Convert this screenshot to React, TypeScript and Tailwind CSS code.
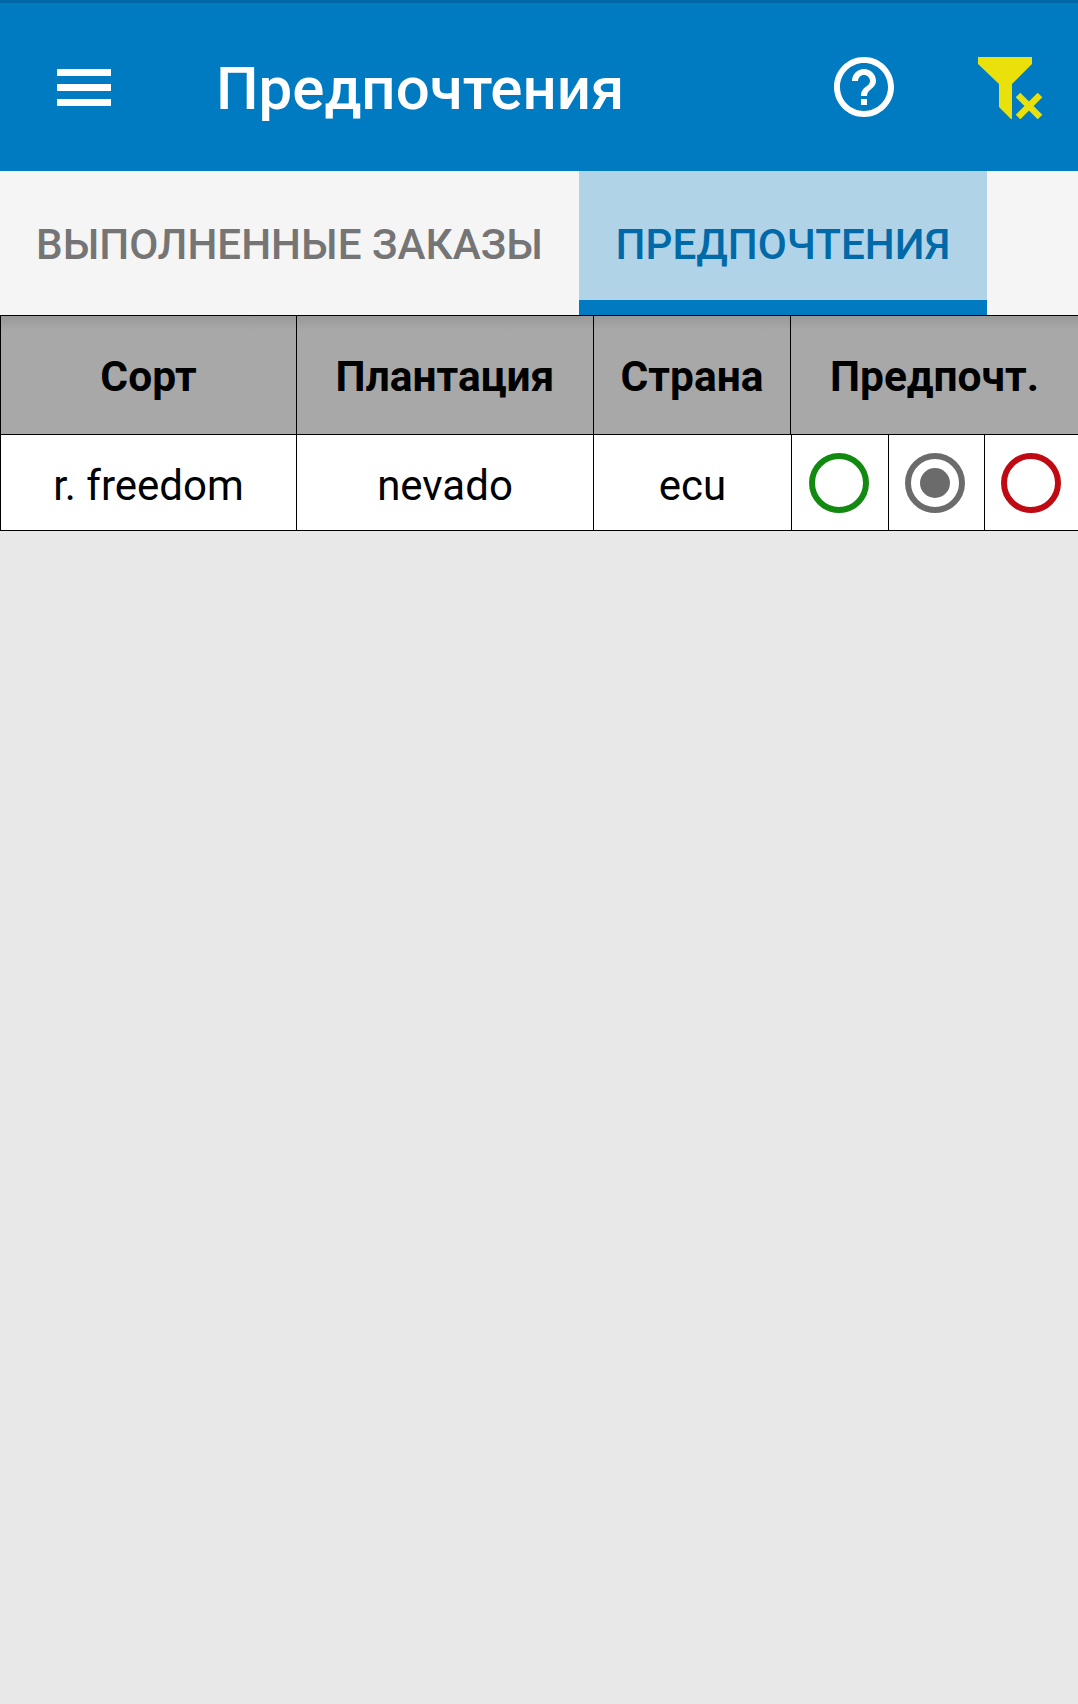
import { MdHelpOutline } from "react-icons/md"

function FilterClear() {
    return (
        <svg width="66" height="62" viewBox="0 0 66 62" className="block">
            <polygon points="0,0 54,0 54,7 34,27 34,63 21,50 21,27 0,7" fill="#ebe10a" />
            <path d="M40 38 L62 60 M62 38 L40 60" stroke="#ebe10a" strokeWidth="6.5" />
        </svg>
    )
}

function Radio({ color, checked }: { color: string; checked?: boolean }) {
    return (
        <svg width="60" height="60" viewBox="0 0 60 60" className="block">
            <circle cx="30" cy="30" r="27" fill="none" stroke={color} strokeWidth="6" />
            {checked && <circle cx="30" cy="30" r="15" fill={color} />}
        </svg>
    )
}

export default function App() {
    return (
        <div className="min-h-[1704px] bg-[#e8e8e8] font-['Roboto',sans-serif]">
            <header className="h-[171px] bg-[#007bc2] border-t-[3px] border-[#0068a6] flex items-center">
                <div className="ml-[57px] w-[54px] flex flex-col gap-[8px]">
                    <span className="h-[7px] bg-white" />
                    <span className="h-[7px] bg-white" />
                    <span className="h-[7px] bg-white" />
                </div>
                <h1 className="ml-[105px] pt-[3px] text-[60px] leading-none font-medium text-white">Предпочтения</h1>
                <MdHelpOutline className="absolute left-[828px] top-[51px] text-white" size={72} />
                <div className="absolute left-[978px] top-[57px]">
                    <FilterClear />
                </div>
            </header>

            <nav className="h-[144px] bg-[#f5f5f5] flex">
                <div className="w-[579px] pl-[36px] pt-[3px] flex items-center text-[42.2px] font-medium text-[#757575] whitespace-nowrap">
                    ВЫПОЛНЕННЫЕ ЗАКАЗЫ
                </div>
                <div className="w-[408px] flex items-center justify-center bg-[#b0d3e8] border-b-[15px] border-[#007bc2] pt-[18px] text-[42.2px] font-medium text-[#0069a8] whitespace-nowrap">
                    ПРЕДПОЧТЕНИЯ
                </div>
            </nav>

            <div className="h-[120px] flex bg-[#a6a6a6] bg-gradient-to-b from-[#999999] to-[#a8a8a8] to-[12%] border-y border-l border-black text-[42.5px] font-bold text-black">
                <div className="w-[296px] pt-[3px] flex items-center justify-center border-r border-black">Сорт</div>
                <div className="w-[297px] pt-[3px] flex items-center justify-center border-r border-black">Плантация</div>
                <div className="w-[197px] pt-[3px] flex items-center justify-center border-r border-black">Страна</div>
                <div className="flex-1 pt-[3px] flex items-center justify-center">Предпочт.</div>
            </div>

            <div className="h-[96px] flex bg-white border-b border-l border-black text-[42px] text-black">
                <div className="w-[296px] pt-[6px] flex items-center justify-center border-r border-black">r. freedom</div>
                <div className="w-[297px] pt-[6px] flex items-center justify-center border-r border-black">nevado</div>
                <div className="w-[198px] pt-[6px] flex items-center justify-center border-r border-black">ecu</div>
                <div className="w-[97px] pr-[2px] flex items-center justify-center border-r border-black"><Radio color="#128a12" /></div>
                <div className="w-[96px] pr-[3px] flex items-center justify-center border-r border-black"><Radio color="#6b6b6b" checked /></div>
                <div className="flex-1 pr-[2px] flex items-center justify-center"><Radio color="#bf0a14" /></div>
            </div>
        </div>
    )
}
